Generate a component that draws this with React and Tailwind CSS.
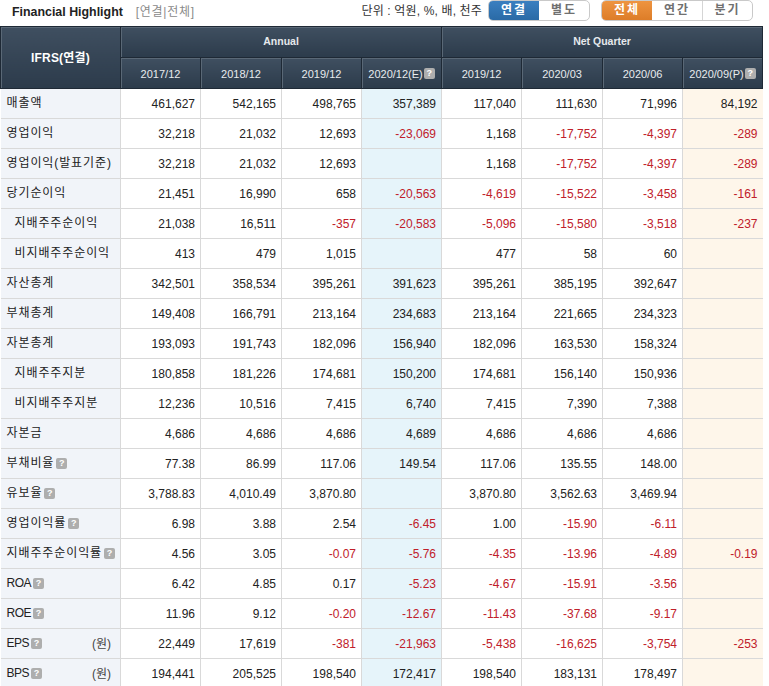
const FONT = '"Liberation Sans","Noto Sans CJK KR",sans-serif';

function Help({ className = "" }) {
  return (
    <span className={`inline-flex h-[11px] w-[11px] items-center justify-center rounded-[2px] bg-[#aeaeae] align-[2px] text-[9px] leading-none font-bold text-white ${className}`}>
      ?
    </span>
  );
}

const rows = [
  ["매출액", 0, 0, "", ["461,627", "542,165", "498,765", "357,389", "117,040", "111,630", "71,996", "84,192"]],
  ["영업이익", 0, 0, "", ["32,218", "21,032", "12,693", "-23,069", "1,168", "-17,752", "-4,397", "-289"]],
  ["영업이익(발표기준)", 0, 0, "", ["32,218", "21,032", "12,693", "", "1,168", "-17,752", "-4,397", "-289"]],
  ["당기순이익", 0, 0, "", ["21,451", "16,990", "658", "-20,563", "-4,619", "-15,522", "-3,458", "-161"]],
  ["지배주주순이익", 1, 0, "", ["21,038", "16,511", "-357", "-20,583", "-5,096", "-15,580", "-3,518", "-237"]],
  ["비지배주주순이익", 1, 0, "", ["413", "479", "1,015", "", "477", "58", "60", ""]],
  ["자산총계", 0, 0, "", ["342,501", "358,534", "395,261", "391,623", "395,261", "385,195", "392,647", ""]],
  ["부채총계", 0, 0, "", ["149,408", "166,791", "213,164", "234,683", "213,164", "221,665", "234,323", ""]],
  ["자본총계", 0, 0, "", ["193,093", "191,743", "182,096", "156,940", "182,096", "163,530", "158,324", ""]],
  ["지배주주지분", 1, 0, "", ["180,858", "181,226", "174,681", "150,200", "174,681", "156,140", "150,936", ""]],
  ["비지배주주지분", 1, 0, "", ["12,236", "10,516", "7,415", "6,740", "7,415", "7,390", "7,388", ""]],
  ["자본금", 0, 0, "", ["4,686", "4,686", "4,686", "4,689", "4,686", "4,686", "4,686", ""]],
  ["부채비율", 0, 1, "", ["77.38", "86.99", "117.06", "149.54", "117.06", "135.55", "148.00", ""]],
  ["유보율", 0, 1, "", ["3,788.83", "4,010.49", "3,870.80", "", "3,870.80", "3,562.63", "3,469.94", ""]],
  ["영업이익률", 0, 1, "", ["6.98", "3.88", "2.54", "-6.45", "1.00", "-15.90", "-6.11", ""]],
  ["지배주주순이익률", 0, 1, "", ["4.56", "3.05", "-0.07", "-5.76", "-4.35", "-13.96", "-4.89", "-0.19"]],
  ["ROA", 0, 1, "", ["6.42", "4.85", "0.17", "-5.23", "-4.67", "-15.91", "-3.56", ""]],
  ["ROE", 0, 1, "", ["11.96", "9.12", "-0.20", "-12.67", "-11.43", "-37.68", "-9.17", ""]],
  ["EPS", 0, 1, "(원)", ["22,449", "17,619", "-381", "-21,963", "-5,438", "-16,625", "-3,754", "-253"]],
  ["BPS", 0, 1, "(원)", ["194,441", "205,525", "198,540", "172,417", "198,540", "183,131", "178,497", ""]],
];

const years = ["2017/12", "2018/12", "2019/12", "2020/12(E)", "2019/12", "2020/03", "2020/06", "2020/09(P)"];
const widths = ["w-[120px]", "w-[80px]", "w-[81px]", "w-[80px]", "w-[80px]", "w-[80px]", "w-[81px]", "w-[80px]", "w-[80px]"];
const latin = ["ROA", "ROE", "EPS", "BPS"];

const headBg = "bg-gradient-to-b from-[#3f4f60] to-[#2c3b4b] border border-[#1e2935] shadow-[inset_1px_1px_0_#5a6876]";

function Seg({ items, active, activeCls }) {
  return (
    <div className="flex h-[21px] overflow-hidden rounded-[5px] border border-[#c9c9c9] bg-white">
      {items.map((t, i) => (
        <div
          key={t}
          className={`flex w-[50px] items-center justify-center pb-[1px] text-[12px] font-bold tracking-[2px] ${i === active ? activeCls : "text-[#707070]"} ${i > 1 ? "border-l border-[#d5d5d5]" : ""}`}
        >
          {t}
        </div>
      ))}
    </div>
  );
}

export default function App() {
  return (
    <div className="h-[686px] w-[769px] overflow-hidden bg-white" style={{ fontFamily: FONT }}>
      <div className="flex h-[26px] w-[763px] items-start justify-between pr-[10px]">
        <div className="flex items-center pl-[12px] pt-[3px]">
          <span className="text-[12.4px] font-bold text-[#222222]">Financial Highlight</span>
          <span className="ml-[13px] text-[12px] tracking-[0.7px] text-[#8a8a8a]">[연결|전체]</span>
        </div>
        <div className="flex items-center">
          <span className="mr-[6px] text-[12px] tracking-[0.15px] text-[#333333]">단위 : 억원, %, 배, 천주</span>
          <Seg items={["연결", "별도"]} active={0} activeCls="bg-gradient-to-b from-[#3a7fc0] to-[#2a6aa6] text-white" />
          <div className="w-[11px]" />
          <Seg items={["전체", "연간", "분기"]} active={0} activeCls="bg-gradient-to-b from-[#ee9440] to-[#dd7d28] text-white" />
        </div>
      </div>
      <table className="w-[762px] table-fixed border-collapse text-[12px]">
        <colgroup>
          {widths.map((w, i) => (
            <col key={i} className={w} />
          ))}
        </colgroup>
        <thead className="text-white">
          <tr className="h-[31px]">
            <th rowSpan={2} className={`${headBg} text-[12px] font-bold tracking-[0.2px]`}>IFRS(연결)</th>
            <th colSpan={4} className={`${headBg} text-[10.5px] font-bold text-[#e6e9ec]`}>Annual</th>
            <th colSpan={4} className={`${headBg} text-[10.5px] font-bold text-[#e6e9ec]`}>Net Quarter</th>
          </tr>
          <tr className="h-[31px]">
            {years.map((y, i) => (
              <th key={i} className={`${headBg} whitespace-nowrap pt-[2px] text-[11px] font-normal text-[#e8ebee]`}>
                {y}
                {(i === 3 || i === 7) && <Help className="ml-[1px]" />}
              </th>
            ))}
          </tr>
        </thead>
        <tbody>
          {rows.map(([label, indent, help, unit, vals]) => (
            <tr key={label} className="h-[30px] border-b border-[#d9d9d9]">
              <th className={`border-r border-[#d9d9d9] bg-[#f1f4f9] pb-[1px] text-left font-normal text-[#222222] ${indent ? "pl-[14px]" : "pl-[6px]"}`}>
                <div className="flex items-center">
                  <span className={latin.includes(label) ? "tracking-[-0.5px]" : "tracking-[0.9px]"}>{label}</span>
                  {help ? <Help className="ml-[2px]" /> : null}
                  {unit ? <span className="ml-auto mr-[9px] pt-[2px] text-[#444444]">{unit}</span> : null}
                </div>
              </th>
              {vals.map((v, i) => (
                <td
                  key={i}
                  className={`border-r border-[#d9d9d9] pr-[5px] pt-[1px] text-right ${i === 3 ? "bg-[#e6f4fa]" : ""} ${i === 7 ? "bg-[#fef6ea] border-r-0" : ""} ${v.startsWith("-") ? "text-[#c0202a]" : "text-[#222222]"}`}
                >
                  {v}
                </td>
              ))}
            </tr>
          ))}
        </tbody>
      </table>
    </div>
  );
}
